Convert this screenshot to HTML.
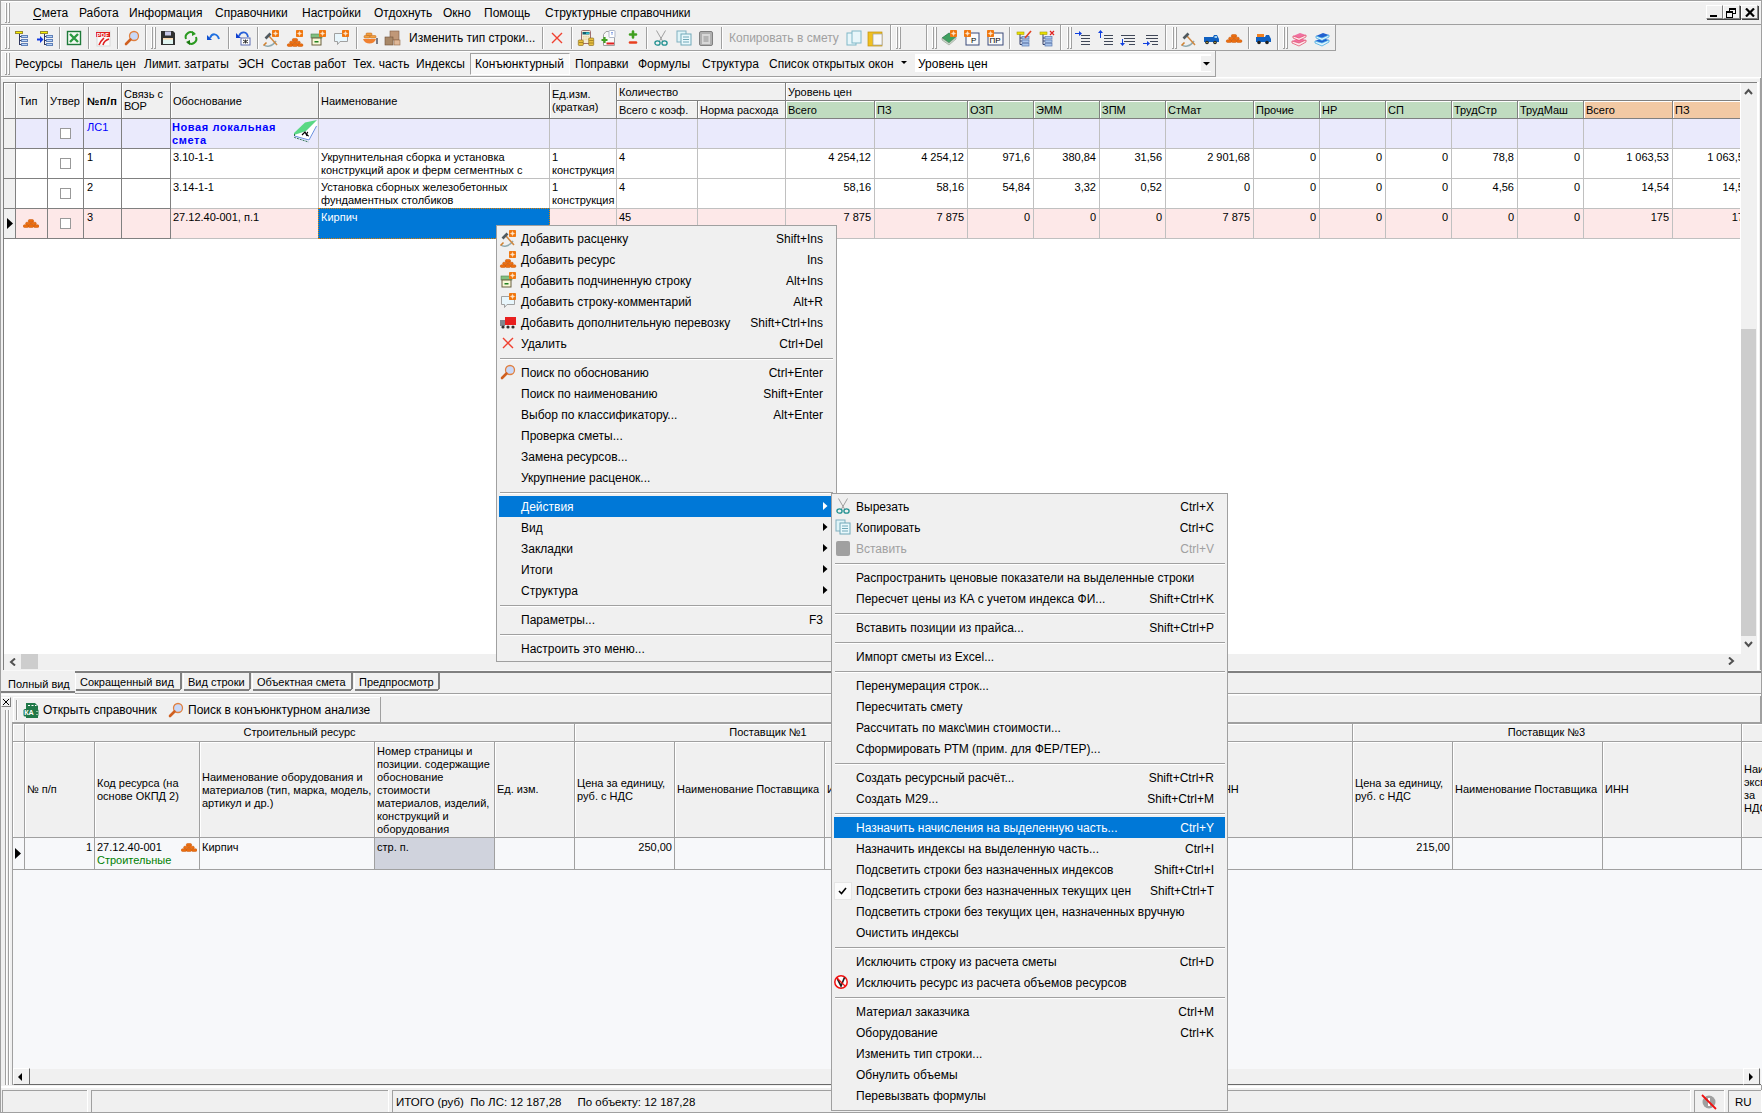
<!DOCTYPE html><html><head><meta charset="utf-8"><style>
*{margin:0;padding:0;box-sizing:border-box}
html,body{width:1762px;height:1113px;overflow:hidden;background:#f0f0f0;font-family:"Liberation Sans",sans-serif;font-size:11px;color:#000}
body>div,body>span,body>svg{position:absolute}
span{white-space:pre;line-height:13px}
.m{font-size:12px;line-height:15px}
.g{font-size:11px;line-height:13px}
</style></head><body><div style="left:0px;top:0px;width:1762px;height:1px;background:#a0a0a0"></div><div style="left:0px;top:0px;width:1px;height:1113px;background:#a0a0a0"></div><div style="left:1761px;top:0px;width:1px;height:1113px;background:#a0a0a0"></div><div style="left:1px;top:1px;width:1760px;height:1px;background:#ffffff"></div><div style="left:1px;top:24px;width:1760px;height:1px;background:#a0a0a0"></div><div style="left:5px;top:3px;width:1px;height:20px;background:#ffffff"></div><div style="left:6px;top:3px;width:1px;height:20px;background:#a0a0a0"></div><div style="left:8px;top:3px;width:1px;height:20px;background:#ffffff"></div><div style="left:9px;top:3px;width:1px;height:20px;background:#a0a0a0"></div><div style="left:5px;top:22px;width:2px;height:1px;background:#a0a0a0"></div><div style="left:8px;top:22px;width:2px;height:1px;background:#a0a0a0"></div><span class="m" style="left:33px;top:6px;">Смета</span><span class="m" style="left:79px;top:6px;">Работа</span><span class="m" style="left:129px;top:6px;">Информация</span><span class="m" style="left:215px;top:6px;">Справочники</span><span class="m" style="left:302px;top:6px;">Настройки</span><span class="m" style="left:374px;top:6px;">Отдохнуть</span><span class="m" style="left:443px;top:6px;">Окно</span><span class="m" style="left:484px;top:6px;">Помощь</span><span class="m" style="left:545px;top:6px;">Структурные справочники</span><div style="left:33px;top:19px;width:8px;height:1px;background:#000"></div><div style="left:1706px;top:5px;width:17px;height:14px;background:#f0f0f0;border-top:1px solid #fff;border-left:1px solid #fff;border-right:1px solid #808080;border-bottom:1px solid #808080;box-shadow:1px 1px 0 #404040"></div><div style="left:1723px;top:5px;width:17px;height:14px;background:#f0f0f0;border-top:1px solid #fff;border-left:1px solid #fff;border-right:1px solid #808080;border-bottom:1px solid #808080;box-shadow:1px 1px 0 #404040"></div><div style="left:1741px;top:5px;width:17px;height:14px;background:#f0f0f0;border-top:1px solid #fff;border-left:1px solid #fff;border-right:1px solid #808080;border-bottom:1px solid #808080;box-shadow:1px 1px 0 #404040"></div><svg style="left:1710px;top:15px" width="7" height="2" viewBox="0 0 7 2"><rect x="0" y="0" width="7" height="2" fill="#000"/></svg><svg style="left:1726px;top:8px" width="10" height="10" viewBox="0 0 10 10" shape-rendering="crispEdges"><rect x="3" y="0" width="7" height="2" fill="#000"/><rect x="3" y="0" width="1" height="4" fill="#000"/><rect x="9" y="0" width="1" height="6" fill="#000"/><rect x="6" y="5" width="4" height="1" fill="#000"/><rect x="0" y="3" width="7" height="7" fill="#000"/><rect x="1" y="5" width="5" height="4" fill="#f0f0f0"/></svg><svg style="left:1745px;top:8px" width="10" height="9" viewBox="0 0 10 9"><path d="M1 .5L9 8.5M9 .5L1 8.5" stroke="#000" stroke-width="2.2"/></svg><div style="left:1px;top:25px;width:145px;height:1px;background:#ffffff"></div><div style="left:1px;top:25px;width:1px;height:26px;background:#ffffff"></div><div style="left:1px;top:50px;width:145px;height:1px;background:#a0a0a0"></div><div style="left:145px;top:25px;width:1px;height:26px;background:#a0a0a0"></div><div style="left:5px;top:27px;width:1px;height:22px;background:#ffffff"></div><div style="left:6px;top:27px;width:1px;height:22px;background:#a0a0a0"></div><div style="left:8px;top:27px;width:1px;height:22px;background:#ffffff"></div><div style="left:9px;top:27px;width:1px;height:22px;background:#a0a0a0"></div><div style="left:5px;top:48px;width:2px;height:1px;background:#a0a0a0"></div><div style="left:8px;top:48px;width:2px;height:1px;background:#a0a0a0"></div><svg style="left:15px;top:30px;overflow:visible" width="16" height="16" viewBox="0 0 16 16"><g shape-rendering="crispEdges" transform="translate(0,-1)"><rect x="0" y="2" width="8" height="3" fill="#988c30"/><rect x="1" y="3" width="6" height="1" fill="#f8f000"/><rect x="4" y="5" width="1" height="11" fill="#303860"/><rect x="5" y="7" width="2" height="1" fill="#303860"/><rect x="5" y="11" width="2" height="1" fill="#303860"/><rect x="5" y="15" width="2" height="1" fill="#303860"/><rect x="6" y="6" width="7" height="3" fill="#6080b8"/><rect x="7" y="7" width="5" height="1" fill="#b8d4f8"/><rect x="6" y="10" width="7" height="3" fill="#6080b8"/><rect x="7" y="11" width="5" height="1" fill="#b8d4f8"/><rect x="6" y="14" width="7" height="3" fill="#6080b8"/><rect x="7" y="15" width="5" height="1" fill="#b8d4f8"/></g></svg><svg style="left:37px;top:30px;overflow:visible" width="16" height="16" viewBox="0 0 16 16"><g shape-rendering="crispEdges" transform="translate(0,-1)"><rect x="3" y="2" width="8" height="3" fill="#988c30"/><rect x="4" y="3" width="6" height="1" fill="#f8f000"/><rect x="7" y="5" width="1" height="11" fill="#303860"/><rect x="8" y="7" width="2" height="1" fill="#303860"/><rect x="8" y="11" width="2" height="1" fill="#303860"/><rect x="8" y="15" width="2" height="1" fill="#303860"/><rect x="9" y="6" width="7" height="3" fill="#6080b8"/><rect x="10" y="7" width="5" height="1" fill="#b8d4f8"/><rect x="9" y="10" width="7" height="3" fill="#6080b8"/><rect x="10" y="11" width="5" height="1" fill="#b8d4f8"/><rect x="9" y="14" width="7" height="3" fill="#6080b8"/><rect x="10" y="15" width="5" height="1" fill="#b8d4f8"/></g><path d="M0 8.5H3V6L6.5 9.5L3 13V10.5H0Z" fill="#1038e0"/></svg><div style="left:59px;top:27px;width:1px;height:22px;background:#a0a0a0"></div><div style="left:60px;top:27px;width:1px;height:22px;background:#ffffff"></div><svg style="left:66px;top:30px;overflow:visible" width="16" height="16" viewBox="0 0 16 16"><rect x="1.5" y="1.5" width="13" height="13" fill="#f4faf4" stroke="#1e7a3a" stroke-width="1.4"/><path d="M4 4L12 12M12 4L4 12" stroke="#2a9a40" stroke-width="2.4"/></svg><div style="left:88px;top:27px;width:1px;height:22px;background:#a0a0a0"></div><div style="left:89px;top:27px;width:1px;height:22px;background:#ffffff"></div><svg style="left:95px;top:30px;overflow:visible" width="16" height="16" viewBox="0 0 16 16"><rect x="2" y="1" width="13" height="15" fill="#fafafa" stroke="#d8d8d8"/><rect x="1" y="2" width="14" height="5" fill="#e02020"/><text x="1.8" y="6.6" font-size="5.6" font-family="Liberation Sans" font-weight="bold" fill="#fff" letter-spacing="0.3">PDF</text><path d="M4 15C6 10 8 9 9 8M8 15C9 11 11 10 14 9" stroke="#e02020" stroke-width="1.6" fill="none"/></svg><div style="left:117px;top:27px;width:1px;height:22px;background:#a0a0a0"></div><div style="left:118px;top:27px;width:1px;height:22px;background:#ffffff"></div><svg style="left:124px;top:30px;overflow:visible" width="16" height="16" viewBox="0 0 16 16"><circle cx="10" cy="6" r="4.5" fill="#c8d8f8" stroke="#e08040" stroke-width="1.3"/><path d="M6.5 9.5L2 14" stroke="#d06020" stroke-width="2.6" stroke-linecap="round"/></svg><div style="left:146px;top:25px;width:745px;height:1px;background:#ffffff"></div><div style="left:146px;top:25px;width:1px;height:26px;background:#ffffff"></div><div style="left:146px;top:50px;width:745px;height:1px;background:#a0a0a0"></div><div style="left:890px;top:25px;width:1px;height:26px;background:#a0a0a0"></div><div style="left:151px;top:27px;width:1px;height:22px;background:#ffffff"></div><div style="left:152px;top:27px;width:1px;height:22px;background:#a0a0a0"></div><div style="left:154px;top:27px;width:1px;height:22px;background:#ffffff"></div><div style="left:155px;top:27px;width:1px;height:22px;background:#a0a0a0"></div><div style="left:151px;top:48px;width:2px;height:1px;background:#a0a0a0"></div><div style="left:154px;top:48px;width:2px;height:1px;background:#a0a0a0"></div><svg style="left:160px;top:30px;overflow:visible" width="16" height="16" viewBox="0 0 16 16"><path d="M1 1H13L15 3V15H1Z" fill="#303030"/><rect x="5" y="1.5" width="6" height="4" fill="#c8c8e8"/><rect x="3" y="8" width="10" height="6" fill="#e0f4f0"/><rect x="3" y="8" width="10" height="1.5" fill="#fcd8b0"/></svg><svg style="left:183px;top:30px;overflow:visible" width="16" height="16" viewBox="0 0 16 16"><path d="M3 9A5 5 0 0 1 11 3.5" stroke="#2a9a20" stroke-width="2" fill="none"/><path d="M13 7A5 5 0 0 1 5 12.5" stroke="#2a9a20" stroke-width="2" fill="none"/><path d="M9 1L13 4L9 6Z" fill="#2a9a20"/><path d="M7 15L3 12L7 10Z" fill="#1a7a10"/></svg><svg style="left:206px;top:30px;overflow:visible" width="16" height="16" viewBox="0 0 16 16"><path d="M4 8C6 3 11 3 13 9" stroke="#2070e0" stroke-width="2" fill="none"/><path d="M1 5L6 10H1Z" fill="#1050d0"/></svg><div style="left:228px;top:27px;width:1px;height:22px;background:#a0a0a0"></div><div style="left:229px;top:27px;width:1px;height:22px;background:#ffffff"></div><svg style="left:236px;top:30px;overflow:visible" width="16" height="16" viewBox="0 0 16 16"><path d="M3 6C5 1 11 1 12 7" stroke="#2860d8" stroke-width="1.8" fill="none"/><path d="M0 3L5 8H0Z" fill="#1040d0"/><rect x="5" y="8" width="9" height="7" fill="#fff" stroke="#5a6ab0"/><path d="M7 10L12 13M12 10L7 13M9.5 9.5V13.5" stroke="#303030" stroke-width="1"/></svg><div style="left:257px;top:27px;width:1px;height:22px;background:#a0a0a0"></div><div style="left:258px;top:27px;width:1px;height:22px;background:#ffffff"></div><svg style="left:263px;top:30px;overflow:visible" width="16" height="16" viewBox="0 0 16 16"><path d="M1 15C3 17 9 17 13 11" stroke="#90aab0" stroke-width="1.5" fill="none"/><path d="M0.5 15.5L3.5 12.5" stroke="#d08030" stroke-width="1.6"/><path d="M6 6L14 15" stroke="#d08840" stroke-width="1.5"/><path d="M2.5 8.5L7.5 3.5" stroke="#505a60" stroke-width="2.6"/><rect x="9" y="0" width="7" height="7" rx="0.8" fill="#f07810"/><circle cx="12.5" cy="3.5" r="1.3" fill="#fff"/><path d="M12.5 0.8V6.2M9.8 3.5H15.2" stroke="#fde0c0" stroke-width="0.6"/></svg><svg style="left:287px;top:30px;overflow:visible" width="16" height="16" viewBox="0 0 16 16"><g fill="#f07010" stroke="#c05000" stroke-width="0.5"><rect x="5.3" y="8.6" width="5.3" height="2.6" rx="1.2"/><rect x="2.65" y="11.2" width="5.3" height="2.6" rx="1.2"/><rect x="7.95" y="11.2" width="5.3" height="2.6" rx="1.2"/><rect x="0.3" y="13.8" width="5.3" height="2.6" rx="1.2"/><rect x="5.3" y="13.8" width="5.3" height="2.6" rx="1.2"/><rect x="10.6" y="13.8" width="5.3" height="2.6" rx="1.2"/></g><rect x="9" y="0" width="7" height="7" rx="0.8" fill="#f07810"/><circle cx="12.5" cy="3.5" r="1.3" fill="#fff"/><path d="M12.5 0.8V6.2M9.8 3.5H15.2" stroke="#fde0c0" stroke-width="0.6"/></svg><svg style="left:310px;top:30px;overflow:visible" width="16" height="16" viewBox="0 0 16 16"><rect x="1" y="4" width="11" height="4" fill="#80c080" stroke="#508050" stroke-width="0.6"/><rect x="2" y="8" width="9" height="7" fill="#f8f8d8" stroke="#6a6040"/><rect x="4.5" y="11" width="4" height="1.5" fill="#208020"/><rect x="9" y="0" width="7" height="7" rx="0.8" fill="#f07810"/><circle cx="12.5" cy="3.5" r="1.3" fill="#fff"/><path d="M12.5 0.8V6.2M9.8 3.5H15.2" stroke="#fde0c0" stroke-width="0.6"/></svg><svg style="left:333px;top:30px;overflow:visible" width="16" height="16" viewBox="0 0 16 16"><path d="M1.5 3.5H14.5V11.5H7L4.5 14.5V11.5H1.5Z" fill="#e8f6fc" stroke="#a0a0a0"/><rect x="9" y="0" width="7" height="7" rx="0.8" fill="#f07810"/><circle cx="12.5" cy="3.5" r="1.3" fill="#fff"/><path d="M12.5 0.8V6.2M9.8 3.5H15.2" stroke="#fde0c0" stroke-width="0.6"/></svg><div style="left:356px;top:27px;width:1px;height:22px;background:#a0a0a0"></div><div style="left:357px;top:27px;width:1px;height:22px;background:#ffffff"></div><svg style="left:362px;top:30px;overflow:visible" width="16" height="16" viewBox="0 0 16 16"><path d="M1 9C3 15 12 15 14 9Z" fill="#f08030"/><g fill="#f0a040" stroke="#c06010" stroke-width="0.5"><rect x="4" y="3" width="6" height="2.5" rx="1"/><rect x="2" y="5.5" width="6" height="2.5" rx="1"/><rect x="8" y="5.5" width="6" height="2.5" rx="1"/></g><path d="M15 8V14" stroke="#303040" stroke-width="1.2"/></svg><svg style="left:385px;top:30px;overflow:visible" width="16" height="16" viewBox="0 0 16 16"><rect x="5" y="1" width="9" height="9" fill="#c09878" stroke="#806048" stroke-width="0.6"/><rect x="0" y="7" width="8" height="8" fill="#a88868" stroke="#705038" stroke-width="0.6"/><rect x="9" y="10" width="6" height="5" fill="#e0b898" stroke="#906848" stroke-width="0.6"/></svg><span class="m" style="left:409px;top:31px;">Изменить тип строки...</span><div style="left:542px;top:27px;width:1px;height:22px;background:#a0a0a0"></div><div style="left:543px;top:27px;width:1px;height:22px;background:#ffffff"></div><svg style="left:549px;top:30px;overflow:visible" width="16" height="16" viewBox="0 0 16 16"><path d="M3 3L13 13M13 3L3 13" stroke="#f04030" stroke-width="1.4"/></svg><div style="left:571px;top:27px;width:1px;height:22px;background:#a0a0a0"></div><div style="left:572px;top:27px;width:1px;height:22px;background:#ffffff"></div><svg style="left:578px;top:30px;overflow:visible" width="16" height="16" viewBox="0 0 16 16"><rect x="3.5" y="0.5" width="9" height="13" rx="1" fill="#f4ecd8" stroke="#a07070"/><rect x="4.5" y="2" width="7" height="2.5" fill="#106070"/><rect x="8" y="2.5" width="3" height="1.5" fill="#30c0d0"/><g fill="#e8d8a0"><rect x="5" y="6" width="1.5" height="1.5"/><rect x="7.3" y="6" width="1.5" height="1.5"/><rect x="9.6" y="6" width="1.5" height="1.5"/><rect x="5" y="8.5" width="1.5" height="1.5"/><rect x="7.3" y="8.5" width="1.5" height="1.5"/><rect x="9.6" y="8.5" width="1.5" height="1.5"/></g><g fill="#e8c040" stroke="#806010" stroke-width="0.6"><rect x="0.3" y="10" width="5" height="5.5" rx="0.8"/><rect x="10.7" y="8" width="5" height="7.5" rx="0.8"/></g><path d="M1 12.5H5M11.3 10.5H15.3M11.3 13H15.3" stroke="#806010" stroke-width="0.6"/></svg><svg style="left:601px;top:30px;overflow:visible" width="16" height="16" viewBox="0 0 16 16"><path d="M2.5 4.5L5 1.5H13.5V15.5H2.5Z" fill="#f8f8f8" stroke="#a0a0a0"/><rect x="8" y="0.5" width="6" height="7" rx="0.8" fill="#fff" stroke="#b0b8c8"/><path d="M10 2.5H12M10 4H12" stroke="#7090e0" stroke-width="0.8"/><path d="M0.5 10H6.5M3.5 7V13" stroke="#40a020" stroke-width="2.2"/><path d="M5.5 13.5H13" stroke="#e02020" stroke-width="2"/></svg><svg style="left:627px;top:30px;overflow:visible" width="16" height="16" viewBox="0 0 16 16"><path d="M3 4.5H9M6 1.5V7.5" stroke="#40a020" stroke-width="2.6" stroke-linecap="round"/><path d="M3 12.5H9" stroke="#e84020" stroke-width="2.6" stroke-linecap="round"/></svg><div style="left:646px;top:27px;width:1px;height:22px;background:#a0a0a0"></div><div style="left:647px;top:27px;width:1px;height:22px;background:#ffffff"></div><svg style="left:653px;top:30px;overflow:visible" width="16" height="16" viewBox="0 0 16 16"><path d="M3.5 0.5L9.5 11M12.5 0.5L6.5 11" stroke="#a0a0a0" stroke-width="1"/><ellipse cx="4.5" cy="13" rx="2.6" ry="2.2" fill="none" stroke="#209090" stroke-width="1.3"/><ellipse cx="11.5" cy="13" rx="2.6" ry="2.2" fill="none" stroke="#209090" stroke-width="1.3"/></svg><svg style="left:676px;top:30px;overflow:visible" width="16" height="16" viewBox="0 0 16 16"><rect x="1" y="1" width="9" height="11" fill="#e0f4f8" stroke="#80b0c0"/><rect x="5" y="4" width="10" height="11" fill="#e8f8fc" stroke="#70a8b8"/><path d="M7 7H13M7 9.5H13M7 12H13" stroke="#70a8b8"/></svg><svg style="left:698px;top:30px;overflow:visible" width="16" height="16" viewBox="0 0 16 16"><rect x="1.5" y="1.5" width="13" height="14" rx="1.5" fill="#b0b0b0" stroke="#808080"/><rect x="4" y="4" width="8" height="10" fill="#d8d8d8"/><path d="M5.5 7H10.5M5.5 9H10.5M5.5 11H10.5" stroke="#909090"/></svg><div style="left:721px;top:27px;width:1px;height:22px;background:#a0a0a0"></div><div style="left:722px;top:27px;width:1px;height:22px;background:#ffffff"></div><span class="m" style="left:729px;top:31px;color:#a0a0a0">Копировать в смету</span><svg style="left:846px;top:30px;overflow:visible" width="16" height="16" viewBox="0 0 16 16"><rect x="1" y="3" width="9" height="12" fill="#e8f6fa" stroke="#80b8c8"/><rect x="6" y="1" width="9" height="12" fill="#e8f6fa" stroke="#80b8c8"/></svg><svg style="left:868px;top:30px;overflow:visible" width="16" height="16" viewBox="0 0 16 16"><rect x="0" y="2" width="14" height="14" fill="#f0c020" stroke="#c09010" stroke-width="0.7"/><rect x="5" y="4" width="9" height="11" fill="#f8f8f8" stroke="#a0a0a0" stroke-width="0.7"/></svg><div style="left:891px;top:25px;width:36px;height:1px;background:#ffffff"></div><div style="left:891px;top:25px;width:1px;height:26px;background:#ffffff"></div><div style="left:891px;top:50px;width:36px;height:1px;background:#a0a0a0"></div><div style="left:926px;top:25px;width:1px;height:26px;background:#a0a0a0"></div><div style="left:896px;top:27px;width:1px;height:22px;background:#ffffff"></div><div style="left:897px;top:27px;width:1px;height:22px;background:#a0a0a0"></div><div style="left:899px;top:27px;width:1px;height:22px;background:#ffffff"></div><div style="left:900px;top:27px;width:1px;height:22px;background:#a0a0a0"></div><div style="left:896px;top:48px;width:2px;height:1px;background:#a0a0a0"></div><div style="left:899px;top:48px;width:2px;height:1px;background:#a0a0a0"></div><div style="left:927px;top:25px;width:134px;height:1px;background:#ffffff"></div><div style="left:927px;top:25px;width:1px;height:26px;background:#ffffff"></div><div style="left:927px;top:50px;width:134px;height:1px;background:#a0a0a0"></div><div style="left:1060px;top:25px;width:1px;height:26px;background:#a0a0a0"></div><div style="left:932px;top:27px;width:1px;height:22px;background:#ffffff"></div><div style="left:933px;top:27px;width:1px;height:22px;background:#a0a0a0"></div><div style="left:935px;top:27px;width:1px;height:22px;background:#ffffff"></div><div style="left:936px;top:27px;width:1px;height:22px;background:#a0a0a0"></div><div style="left:932px;top:48px;width:2px;height:1px;background:#a0a0a0"></div><div style="left:935px;top:48px;width:2px;height:1px;background:#a0a0a0"></div><svg style="left:941px;top:30px;overflow:visible" width="16" height="16" viewBox="0 0 16 16"><path d="M1 8L8 3L15 7L8 13Z" fill="#40a060" stroke="#207040" stroke-width="0.7"/><path d="M1 8V10L8 15L15 9V7L8 13Z" fill="#c8e0c8" stroke="#808080" stroke-width="0.5"/><rect x="9" y="0" width="7" height="7" rx="0.8" fill="#f07810"/><circle cx="12.5" cy="3.5" r="1.3" fill="#fff"/><path d="M12.5 0.8V6.2M9.8 3.5H15.2" stroke="#fde0c0" stroke-width="0.6"/></svg><svg style="left:964px;top:30px;overflow:visible" width="16" height="16" viewBox="0 0 16 16"><rect x="2" y="3" width="13" height="12" fill="#fafafa" stroke="#3a4a7a"/><text x="7" y="13" font-size="8" font-family="Liberation Sans" fill="#000">Р</text><rect x="0" y="0" width="7" height="7" rx="0.8" fill="#f07810"/><circle cx="3.5" cy="3.5" r="1.3" fill="#fff"/><path d="M3.5 0.8V6.2M0.8 3.5H6.2" stroke="#fde0c0" stroke-width="0.6"/></svg><svg style="left:987px;top:30px;overflow:visible" width="16" height="16" viewBox="0 0 16 16"><rect x="1" y="3" width="15" height="12" fill="#fafafa" stroke="#3a4a7a"/><text x="2.5" y="13" font-size="8" font-family="Liberation Sans" fill="#000">ПР</text><rect x="0" y="0" width="7" height="7" rx="0.8" fill="#f07810"/><circle cx="3.5" cy="3.5" r="1.3" fill="#fff"/><path d="M3.5 0.8V6.2M0.8 3.5H6.2" stroke="#fde0c0" stroke-width="0.6"/></svg><div style="left:1009px;top:27px;width:1px;height:22px;background:#a0a0a0"></div><div style="left:1010px;top:27px;width:1px;height:22px;background:#ffffff"></div><svg style="left:1016px;top:30px;overflow:visible" width="16" height="16" viewBox="0 0 16 16"><rect x="1" y="2" width="7" height="2.5" fill="#e8e000" stroke="#a8a000" stroke-width="0.6"/><path d="M4 4.5V14.5H6M4 8H6M4 11H6" stroke="#34406a" fill="none"/><rect x="6" y="6.5" width="7" height="2.5" fill="#a8c4ec" stroke="#5a78b0" stroke-width="0.7"/><rect x="6" y="10" width="7" height="2.5" fill="#a8c4ec" stroke="#5a78b0" stroke-width="0.7"/><rect x="6" y="13.5" width="7" height="2.5" fill="#a8c4ec" stroke="#5a78b0" stroke-width="0.7"/><path d="M9 8L15 1" stroke="#e04020" stroke-width="1.6"/></svg><svg style="left:1039px;top:30px;overflow:visible" width="16" height="16" viewBox="0 0 16 16"><rect x="1" y="2" width="7" height="2.5" fill="#e8e000" stroke="#a8a000" stroke-width="0.6"/><path d="M4 4.5V14.5H6M4 8H6M4 11H6" stroke="#34406a" fill="none"/><rect x="6" y="6.5" width="7" height="2.5" fill="#a8c4ec" stroke="#5a78b0" stroke-width="0.7"/><rect x="6" y="10" width="7" height="2.5" fill="#a8c4ec" stroke="#5a78b0" stroke-width="0.7"/><rect x="6" y="13.5" width="7" height="2.5" fill="#a8c4ec" stroke="#5a78b0" stroke-width="0.7"/><path d="M11 1L15 5M15 1L11 5" stroke="#e02020" stroke-width="1.2"/></svg><div style="left:1061px;top:25px;width:105px;height:1px;background:#ffffff"></div><div style="left:1061px;top:25px;width:1px;height:26px;background:#ffffff"></div><div style="left:1061px;top:50px;width:105px;height:1px;background:#a0a0a0"></div><div style="left:1165px;top:25px;width:1px;height:26px;background:#a0a0a0"></div><div style="left:1067px;top:27px;width:1px;height:22px;background:#ffffff"></div><div style="left:1068px;top:27px;width:1px;height:22px;background:#a0a0a0"></div><div style="left:1070px;top:27px;width:1px;height:22px;background:#ffffff"></div><div style="left:1071px;top:27px;width:1px;height:22px;background:#a0a0a0"></div><div style="left:1067px;top:48px;width:2px;height:1px;background:#a0a0a0"></div><div style="left:1070px;top:48px;width:2px;height:1px;background:#a0a0a0"></div><svg style="left:1075.0px;top:30px;overflow:visible" width="16" height="16" viewBox="0 0 16 16"><path d="M6 5.5H15M6 8.5H15M6 11.5H15M6 14.5H15" stroke="#404858" stroke-width="1"/><path d="M0 3H4V1L7 3.5L4 6V4H0Z" fill="#1040e0"/></svg><svg style="left:1097.7px;top:30px;overflow:visible" width="16" height="16" viewBox="0 0 16 16"><path d="M6 5.5H15M6 8.5H15M6 11.5H15M6 14.5H15" stroke="#404858" stroke-width="1"/><path d="M2 8V3H0L2.5 0L5 3H3V8Z" fill="#1040e0"/></svg><svg style="left:1120.4px;top:30px;overflow:visible" width="16" height="16" viewBox="0 0 16 16"><path d="M1 5.5H15M4 8.5H15M4 11.5H15M9 14.5H15" stroke="#404858"/><path d="M2 9V13H0L2.5 16L5 13H3V9Z" fill="#1040e0"/></svg><svg style="left:1143.1px;top:30px;overflow:visible" width="16" height="16" viewBox="0 0 16 16"><path d="M3 5.5H15M3 8.5H15M7 11.5H15M9 14.5H15" stroke="#404858"/><path d="M0 13H4V11L7 13.5L4 16V14H0Z" fill="#1040e0"/></svg><div style="left:1166px;top:25px;width:112px;height:1px;background:#ffffff"></div><div style="left:1166px;top:25px;width:1px;height:26px;background:#ffffff"></div><div style="left:1166px;top:50px;width:112px;height:1px;background:#a0a0a0"></div><div style="left:1277px;top:25px;width:1px;height:26px;background:#a0a0a0"></div><div style="left:1172px;top:27px;width:1px;height:22px;background:#ffffff"></div><div style="left:1173px;top:27px;width:1px;height:22px;background:#a0a0a0"></div><div style="left:1175px;top:27px;width:1px;height:22px;background:#ffffff"></div><div style="left:1176px;top:27px;width:1px;height:22px;background:#a0a0a0"></div><div style="left:1172px;top:48px;width:2px;height:1px;background:#a0a0a0"></div><div style="left:1175px;top:48px;width:2px;height:1px;background:#a0a0a0"></div><svg style="left:1181px;top:30px;overflow:visible" width="16" height="16" viewBox="0 0 16 16"><path d="M1 15C3 17 9 17 13 11" stroke="#90aab0" stroke-width="1.5" fill="none"/><path d="M0.5 15.5L3.5 12.5" stroke="#d08030" stroke-width="1.6"/><path d="M6 6L14 15" stroke="#d08840" stroke-width="1.5"/><path d="M2.5 8.5L7.5 3.5" stroke="#505a60" stroke-width="2.6"/></svg><svg style="left:1203px;top:30px;overflow:visible" width="16" height="16" viewBox="0 0 16 16"><path d="M1 7H10L11 5H14L16 9V12H1Z" fill="#1060c0"/><rect x="11.5" y="6" width="2.5" height="2" fill="#a0d0f0"/><circle cx="4" cy="12.5" r="1.8" fill="#202020"/><circle cx="12" cy="12.5" r="1.8" fill="#202020"/><circle cx="4" cy="12.5" r="0.7" fill="#f0e060"/><circle cx="12" cy="12.5" r="0.7" fill="#f0e060"/></svg><svg style="left:1226px;top:30px;overflow:visible" width="16" height="16" viewBox="0 0 16 16"><g transform="translate(0,-4)"><g fill="#f07010" stroke="#c05000" stroke-width="0.5"><rect x="5.3" y="8.6" width="5.3" height="2.6" rx="1.2"/><rect x="2.65" y="11.2" width="5.3" height="2.6" rx="1.2"/><rect x="7.95" y="11.2" width="5.3" height="2.6" rx="1.2"/><rect x="0.3" y="13.8" width="5.3" height="2.6" rx="1.2"/><rect x="5.3" y="13.8" width="5.3" height="2.6" rx="1.2"/><rect x="10.6" y="13.8" width="5.3" height="2.6" rx="1.2"/></g></g></svg><div style="left:1248px;top:27px;width:1px;height:22px;background:#a0a0a0"></div><div style="left:1249px;top:27px;width:1px;height:22px;background:#ffffff"></div><svg style="left:1255px;top:30px;overflow:visible" width="16" height="16" viewBox="0 0 16 16"><path d="M1 7H10L11 5H14L16 9V12H1Z" fill="#1060c0"/><rect x="2" y="4" width="7" height="3" fill="#f08020"/><circle cx="4" cy="12.5" r="1.8" fill="#202020"/><circle cx="12" cy="12.5" r="1.8" fill="#202020"/></svg><div style="left:1278px;top:25px;width:58px;height:1px;background:#ffffff"></div><div style="left:1278px;top:25px;width:1px;height:26px;background:#ffffff"></div><div style="left:1278px;top:50px;width:58px;height:1px;background:#a0a0a0"></div><div style="left:1335px;top:25px;width:1px;height:26px;background:#a0a0a0"></div><div style="left:1283px;top:27px;width:1px;height:22px;background:#ffffff"></div><div style="left:1284px;top:27px;width:1px;height:22px;background:#a0a0a0"></div><div style="left:1286px;top:27px;width:1px;height:22px;background:#ffffff"></div><div style="left:1287px;top:27px;width:1px;height:22px;background:#a0a0a0"></div><div style="left:1283px;top:48px;width:2px;height:1px;background:#a0a0a0"></div><div style="left:1286px;top:48px;width:2px;height:1px;background:#a0a0a0"></div><svg style="left:1291px;top:30px;overflow:visible" width="16" height="16" viewBox="0 0 16 16"><path d="M1 11L8 8L15 10L8 13Z" fill="#f070a0"/><path d="M1 11V13L8 16L15 12V10L8 13Z" fill="#fce8ee" stroke="#e04060" stroke-width="0.7"/><path d="M2 6L9 3L15 5L8 8Z" fill="#f070a0"/><path d="M2 6V8L8 10.5L15 7V5L8 8Z" fill="#fce8ee" stroke="#e04060" stroke-width="0.7"/></svg><svg style="left:1314px;top:30px;overflow:visible" width="16" height="16" viewBox="0 0 16 16"><path d="M1 11L8 8L15 10L8 13Z" fill="#2060d0"/><path d="M1 11V13L8 16L15 12V10L8 13Z" fill="#e0f4fc" stroke="#30a0e0" stroke-width="0.7"/><path d="M2 6L9 3L15 5L8 8Z" fill="#2060d0"/><path d="M2 6V8L8 10.5L15 7V5L8 8Z" fill="#e0f4fc" stroke="#30a0e0" stroke-width="0.7"/></svg><div style="left:1px;top:51px;width:1215px;height:1px;background:#ffffff"></div><div style="left:1px;top:51px;width:1px;height:26px;background:#ffffff"></div><div style="left:1px;top:76px;width:1215px;height:1px;background:#a0a0a0"></div><div style="left:1215px;top:51px;width:1px;height:26px;background:#a0a0a0"></div><div style="left:5px;top:53px;width:1px;height:22px;background:#ffffff"></div><div style="left:6px;top:53px;width:1px;height:22px;background:#a0a0a0"></div><div style="left:8px;top:53px;width:1px;height:22px;background:#ffffff"></div><div style="left:9px;top:53px;width:1px;height:22px;background:#a0a0a0"></div><div style="left:5px;top:74px;width:2px;height:1px;background:#a0a0a0"></div><div style="left:8px;top:74px;width:2px;height:1px;background:#a0a0a0"></div><span class="m" style="left:15px;top:57px;">Ресурсы</span><span class="m" style="left:71px;top:57px;">Панель цен</span><span class="m" style="left:144px;top:57px;">Лимит. затраты</span><span class="m" style="left:238px;top:57px;">ЭСН</span><span class="m" style="left:271px;top:57px;">Состав работ</span><span class="m" style="left:353px;top:57px;">Тех. часть</span><span class="m" style="left:416px;top:57px;">Индексы</span><span class="m" style="left:575px;top:57px;">Поправки</span><span class="m" style="left:638px;top:57px;">Формулы</span><span class="m" style="left:702px;top:57px;">Структура</span><span class="m" style="left:769px;top:57px;">Список открытых окон</span><div style="left:470px;top:53px;width:100px;height:22px;border-top:1px solid #a0a0a0;border-left:1px solid #a0a0a0;border-right:1px solid #fff;border-bottom:1px solid #fff;background:#f8f8f8"></div><span class="m" style="left:475px;top:57px;">Конъюнктурный</span><svg style="left:901px;top:61px" width="6" height="4" viewBox="0 0 6 4"><path d="M0 0H6L3 3Z" fill="#000"/></svg><div style="left:915px;top:54px;width:296px;height:18px;background:#fff"></div><div style="left:1201px;top:56px;width:10px;height:15px;background:#f0f0f0"></div><svg style="left:1203px;top:62px" width="7" height="4" viewBox="0 0 7 4"><path d="M0 0H7L3.5 3.5Z" fill="#000"/></svg><span class="m" style="left:918px;top:57px;">Уровень цен</span><div style="left:1px;top:77px;width:1760px;height:1px;background:#ffffff"></div><div style="left:1px;top:78px;width:1760px;height:1px;background:#f8f8f8"></div><div style="left:3px;top:82px;width:1756px;height:590px;background:#fff"></div><div style="left:3px;top:654px;width:1737px;height:16px;background:#f0f0f0"></div><div style="left:21px;top:654px;width:17px;height:15px;background:#cdcdcd"></div><svg style="left:9px;top:658px" width="7" height="8" viewBox="0 0 7 8"><path d="M6 .5L2 4L6 7.5" stroke="#505050" stroke-width="2" fill="none"/></svg><svg style="left:1728px;top:657px" width="7" height="8" viewBox="0 0 7 8"><path d="M1 .5L5 4L1 7.5" stroke="#505050" stroke-width="2" fill="none"/></svg><div style="left:1740px;top:83px;width:18px;height:571px;background:#f0f0f0"></div><div style="left:1741px;top:329px;width:15px;height:307px;background:#cdcdcd"></div><svg style="left:1744px;top:88px" width="9" height="7" viewBox="0 0 9 7"><path d="M1 6L4.5 2L8 6" stroke="#505050" stroke-width="2" fill="none"/></svg><svg style="left:1744px;top:641px" width="9" height="7" viewBox="0 0 9 7"><path d="M1 1L4.5 5L8 1" stroke="#505050" stroke-width="2" fill="none"/></svg><div style="left:1740px;top:654px;width:18px;height:16px;background:#f0f0f0"></div><div style="left:3px;top:82px;width:1px;height:589px;background:#808080"></div><div style="left:3px;top:82px;width:1755px;height:1px;background:#808080"></div><div style="left:1757px;top:82px;width:1px;height:589px;background:#ffffff"></div><div style="left:1740px;top:83px;width:1px;height:571px;background:#ffffff"></div><div style="left:1760px;top:78px;width:1px;height:1035px;background:#a0a0a0"></div><div style="left:3px;top:670px;width:1756px;height:1px;background:#f0f0f0"></div><div style="left:4px;top:83px;width:1736px;height:35px;background:#f0f0f0"></div><div style="left:786px;top:101px;width:88px;height:17px;background:#c0dcc0;border-top:1px solid #fff;border-left:1px solid #fff"></div><div style="left:875px;top:101px;width:92px;height:17px;background:#c0dcc0;border-top:1px solid #fff;border-left:1px solid #fff"></div><div style="left:968px;top:101px;width:65px;height:17px;background:#c0dcc0;border-top:1px solid #fff;border-left:1px solid #fff"></div><div style="left:1034px;top:101px;width:65px;height:17px;background:#c0dcc0;border-top:1px solid #fff;border-left:1px solid #fff"></div><div style="left:1100px;top:101px;width:65px;height:17px;background:#c0dcc0;border-top:1px solid #fff;border-left:1px solid #fff"></div><div style="left:1166px;top:101px;width:87px;height:17px;background:#c0dcc0;border-top:1px solid #fff;border-left:1px solid #fff"></div><div style="left:1254px;top:101px;width:65px;height:17px;background:#c0dcc0;border-top:1px solid #fff;border-left:1px solid #fff"></div><div style="left:1320px;top:101px;width:65px;height:17px;background:#c0dcc0;border-top:1px solid #fff;border-left:1px solid #fff"></div><div style="left:1386px;top:101px;width:65px;height:17px;background:#c0dcc0;border-top:1px solid #fff;border-left:1px solid #fff"></div><div style="left:1452px;top:101px;width:65px;height:17px;background:#c0dcc0;border-top:1px solid #fff;border-left:1px solid #fff"></div><div style="left:1518px;top:101px;width:65px;height:17px;background:#c0dcc0;border-top:1px solid #fff;border-left:1px solid #fff"></div><div style="left:1584px;top:101px;width:88px;height:17px;background:#f2c9a4;border-top:1px solid #fff;border-left:1px solid #fff"></div><div style="left:1673px;top:101px;width:67px;height:17px;background:#f2c9a4;border-top:1px solid #fff;border-left:1px solid #fff"></div><div style="left:16px;top:119px;width:1724px;height:29px;background:#eaeafc"></div><div style="left:16px;top:209px;width:1724px;height:29px;background:#fde8e8"></div><div style="left:4px;top:119px;width:11px;height:119px;background:#f0f0f0"></div><div style="left:4px;top:83px;width:1736px;height:1px;background:#ffffff"></div><div style="left:4px;top:83px;width:1px;height:35px;background:#ffffff"></div><div style="left:16px;top:83px;width:1px;height:35px;background:#ffffff"></div><div style="left:48px;top:83px;width:1px;height:35px;background:#ffffff"></div><div style="left:84px;top:83px;width:1px;height:35px;background:#ffffff"></div><div style="left:122px;top:83px;width:1px;height:35px;background:#ffffff"></div><div style="left:171px;top:83px;width:1px;height:35px;background:#ffffff"></div><div style="left:319px;top:83px;width:1px;height:35px;background:#ffffff"></div><div style="left:550px;top:83px;width:1px;height:35px;background:#ffffff"></div><div style="left:617px;top:83px;width:1px;height:35px;background:#ffffff"></div><div style="left:698px;top:101px;width:1px;height:17px;background:#ffffff"></div><div style="left:786px;top:83px;width:1px;height:35px;background:#ffffff"></div><div style="left:875px;top:101px;width:1px;height:17px;background:#ffffff"></div><div style="left:968px;top:101px;width:1px;height:17px;background:#ffffff"></div><div style="left:1034px;top:101px;width:1px;height:17px;background:#ffffff"></div><div style="left:1100px;top:101px;width:1px;height:17px;background:#ffffff"></div><div style="left:1166px;top:101px;width:1px;height:17px;background:#ffffff"></div><div style="left:1254px;top:101px;width:1px;height:17px;background:#ffffff"></div><div style="left:1320px;top:101px;width:1px;height:17px;background:#ffffff"></div><div style="left:1386px;top:101px;width:1px;height:17px;background:#ffffff"></div><div style="left:1452px;top:101px;width:1px;height:17px;background:#ffffff"></div><div style="left:1518px;top:101px;width:1px;height:17px;background:#ffffff"></div><div style="left:1584px;top:101px;width:1px;height:17px;background:#ffffff"></div><div style="left:1673px;top:101px;width:1px;height:17px;background:#ffffff"></div><div style="left:617px;top:101px;width:1123px;height:1px;background:#ffffff"></div><div style="left:3px;top:148px;width:168px;height:1px;background:#808080"></div><div style="left:171px;top:148px;width:1569px;height:1px;background:#c0c0c0"></div><div style="left:3px;top:178px;width:168px;height:1px;background:#808080"></div><div style="left:171px;top:178px;width:1569px;height:1px;background:#c0c0c0"></div><div style="left:3px;top:208px;width:168px;height:1px;background:#808080"></div><div style="left:171px;top:208px;width:1569px;height:1px;background:#c0c0c0"></div><div style="left:3px;top:238px;width:168px;height:1px;background:#808080"></div><div style="left:171px;top:238px;width:1569px;height:1px;background:#c0c0c0"></div><div style="left:3px;top:118px;width:1737px;height:1px;background:#808080"></div><div style="left:616px;top:100px;width:1124px;height:1px;background:#808080"></div><div style="left:15px;top:82px;width:1px;height:156px;background:#808080"></div><div style="left:47px;top:82px;width:1px;height:156px;background:#808080"></div><div style="left:83px;top:82px;width:1px;height:156px;background:#808080"></div><div style="left:121px;top:82px;width:1px;height:156px;background:#808080"></div><div style="left:170px;top:82px;width:1px;height:156px;background:#808080"></div><div style="left:318px;top:82px;width:1px;height:36px;background:#808080"></div><div style="left:318px;top:119px;width:1px;height:119px;background:#c0c0c0"></div><div style="left:549px;top:82px;width:1px;height:36px;background:#808080"></div><div style="left:549px;top:119px;width:1px;height:119px;background:#c0c0c0"></div><div style="left:616px;top:82px;width:1px;height:36px;background:#808080"></div><div style="left:616px;top:119px;width:1px;height:119px;background:#c0c0c0"></div><div style="left:697px;top:100px;width:1px;height:18px;background:#808080"></div><div style="left:697px;top:119px;width:1px;height:119px;background:#c0c0c0"></div><div style="left:785px;top:82px;width:1px;height:36px;background:#808080"></div><div style="left:785px;top:119px;width:1px;height:119px;background:#c0c0c0"></div><div style="left:874px;top:100px;width:1px;height:18px;background:#808080"></div><div style="left:874px;top:119px;width:1px;height:119px;background:#c0c0c0"></div><div style="left:967px;top:100px;width:1px;height:18px;background:#808080"></div><div style="left:967px;top:119px;width:1px;height:119px;background:#c0c0c0"></div><div style="left:1033px;top:100px;width:1px;height:18px;background:#808080"></div><div style="left:1033px;top:119px;width:1px;height:119px;background:#c0c0c0"></div><div style="left:1099px;top:100px;width:1px;height:18px;background:#808080"></div><div style="left:1099px;top:119px;width:1px;height:119px;background:#c0c0c0"></div><div style="left:1165px;top:100px;width:1px;height:18px;background:#808080"></div><div style="left:1165px;top:119px;width:1px;height:119px;background:#c0c0c0"></div><div style="left:1253px;top:100px;width:1px;height:18px;background:#808080"></div><div style="left:1253px;top:119px;width:1px;height:119px;background:#c0c0c0"></div><div style="left:1319px;top:100px;width:1px;height:18px;background:#808080"></div><div style="left:1319px;top:119px;width:1px;height:119px;background:#c0c0c0"></div><div style="left:1385px;top:100px;width:1px;height:18px;background:#808080"></div><div style="left:1385px;top:119px;width:1px;height:119px;background:#c0c0c0"></div><div style="left:1451px;top:100px;width:1px;height:18px;background:#808080"></div><div style="left:1451px;top:119px;width:1px;height:119px;background:#c0c0c0"></div><div style="left:1517px;top:100px;width:1px;height:18px;background:#808080"></div><div style="left:1517px;top:119px;width:1px;height:119px;background:#c0c0c0"></div><div style="left:1583px;top:100px;width:1px;height:18px;background:#808080"></div><div style="left:1583px;top:119px;width:1px;height:119px;background:#c0c0c0"></div><div style="left:1672px;top:100px;width:1px;height:18px;background:#808080"></div><div style="left:1672px;top:119px;width:1px;height:119px;background:#c0c0c0"></div><span class="g" style="left:19px;top:95px;">Тип</span><span class="g" style="left:50px;top:95px;">Утвер</span><span class="g" style="left:87px;top:95px;font-weight:bold;letter-spacing:0.4px">№п/п</span><span class="g" style="left:124px;top:88px;">Связь с</span><span class="g" style="left:124px;top:100px;">ВОР</span><span class="g" style="left:173px;top:95px;">Обоснование</span><span class="g" style="left:321px;top:95px;">Наименование</span><span class="g" style="left:552px;top:88px;">Ед.изм.</span><span class="g" style="left:552px;top:101px;">(краткая)</span><span class="g" style="left:619px;top:86px;">Количество</span><span class="g" style="left:788px;top:86px;">Уровень цен</span><span class="g" style="left:619px;top:104px;">Всего с коэф.</span><span class="g" style="left:700px;top:104px;">Норма расхода</span><span class="g" style="left:788px;top:104px;">Всего</span><span class="g" style="left:877px;top:104px;">ПЗ</span><span class="g" style="left:970px;top:104px;">ОЗП</span><span class="g" style="left:1036px;top:104px;">ЭММ</span><span class="g" style="left:1102px;top:104px;">ЗПМ</span><span class="g" style="left:1168px;top:104px;">СтМат</span><span class="g" style="left:1256px;top:104px;">Прочие</span><span class="g" style="left:1322px;top:104px;">НР</span><span class="g" style="left:1388px;top:104px;">СП</span><span class="g" style="left:1454px;top:104px;">ТрудСтр</span><span class="g" style="left:1520px;top:104px;">ТрудМаш</span><span class="g" style="left:1586px;top:104px;">Всего</span><span class="g" style="left:1675px;top:104px;">ПЗ</span><div style="left:60px;top:128px;width:11px;height:11px;background:#fff;border:1px solid #999"></div><div style="left:60px;top:158px;width:11px;height:11px;background:#fff;border:1px solid #999"></div><div style="left:60px;top:188px;width:11px;height:11px;background:#fff;border:1px solid #999"></div><div style="left:60px;top:218px;width:11px;height:11px;background:#fff;border:1px solid #999"></div><svg style="left:7px;top:218px" width="6" height="11" viewBox="0 0 6 11"><path d="M0 0L6 5.5L0 11Z" fill="#000"/></svg><svg style="left:23px;top:219px" width="16" height="9" viewBox="0 8.5 16 8"><g fill="#f07010" stroke="#c05000" stroke-width="0.5"><rect x="5.3" y="8.6" width="5.3" height="2.6" rx="1.2"/><rect x="2.65" y="11.2" width="5.3" height="2.6" rx="1.2"/><rect x="7.95" y="11.2" width="5.3" height="2.6" rx="1.2"/><rect x="0.3" y="13.8" width="5.3" height="2.6" rx="1.2"/><rect x="5.3" y="13.8" width="5.3" height="2.6" rx="1.2"/><rect x="10.6" y="13.8" width="5.3" height="2.6" rx="1.2"/></g></svg><span class="g" style="left:87px;top:121px;color:#0000ff">ЛС1</span><span class="g" style="left:172px;top:121px;color:#0000ff;font-weight:bold;letter-spacing:0.6px">Новая локальная</span><span class="g" style="left:172px;top:134px;color:#0000ff;font-weight:bold;letter-spacing:0.6px">смета</span><svg style="left:294px;top:119px" width="24" height="24" viewBox="0 0 24 24"><path d="M12 12L23 1L23 6L15 22L0 16Z" fill="#fff"/><path d="M0 14L11 3.5L23 1L12 12L0 16Z" fill="#5ad884"/><path d="M0.5 17L15 21L22.5 7" stroke="#6a90e0" stroke-width="1" fill="none"/><path d="M0.5 15V18.5L14.5 23" stroke="#2a7050" stroke-width="1" fill="none" stroke-dasharray="2 1"/><path d="M8 16L11 13L13 17M14 13C12 14 13 17 15 17" stroke="#000" stroke-width="1.1" fill="none"/></svg><span class="g" style="left:87px;top:151px;">1</span><span class="g" style="left:173px;top:151px;">3.10-1-1</span><div class="g" style="left:321px;top:151px;width:227px;height:28px;overflow:hidden;line-height:13px;white-space:pre;"><div style="height:13px">Укрупнительная сборка и установка</div><div style="height:13px">конструкций арок и ферм сегментных с</div></div><div class="g" style="left:552px;top:151px;width:63px;height:28px;overflow:hidden;line-height:13px;white-space:pre;"><div style="height:13px">1</div><div style="height:13px">конструкция</div></div><span class="g" style="left:619px;top:151px;">4</span><span class="g" style="right:891px;top:151px;">4 254,12</span><span class="g" style="right:798px;top:151px;">4 254,12</span><span class="g" style="right:732px;top:151px;">971,6</span><span class="g" style="right:666px;top:151px;">380,84</span><span class="g" style="right:600px;top:151px;">31,56</span><span class="g" style="right:512px;top:151px;">2 901,68</span><span class="g" style="right:446px;top:151px;">0</span><span class="g" style="right:380px;top:151px;">0</span><span class="g" style="right:314px;top:151px;">0</span><span class="g" style="right:248px;top:151px;">78,8</span><span class="g" style="right:182px;top:151px;">0</span><span class="g" style="right:93px;top:151px;">1 063,53</span><div class="g" style="left:1673px;top:151px;width:67px;height:14px;overflow:hidden"><span style="position:absolute;right:-10px;top:0;white-space:pre">1 063,53</span></div><span class="g" style="left:87px;top:181px;">2</span><span class="g" style="left:173px;top:181px;">3.14-1-1</span><div class="g" style="left:321px;top:181px;width:227px;height:28px;overflow:hidden;line-height:13px;white-space:pre;"><div style="height:13px">Установка сборных железобетонных</div><div style="height:13px">фундаментных столбиков</div></div><div class="g" style="left:552px;top:181px;width:63px;height:28px;overflow:hidden;line-height:13px;white-space:pre;"><div style="height:13px">1</div><div style="height:13px">конструкция</div></div><span class="g" style="left:619px;top:181px;">4</span><span class="g" style="right:891px;top:181px;">58,16</span><span class="g" style="right:798px;top:181px;">58,16</span><span class="g" style="right:732px;top:181px;">54,84</span><span class="g" style="right:666px;top:181px;">3,32</span><span class="g" style="right:600px;top:181px;">0,52</span><span class="g" style="right:512px;top:181px;">0</span><span class="g" style="right:446px;top:181px;">0</span><span class="g" style="right:380px;top:181px;">0</span><span class="g" style="right:314px;top:181px;">0</span><span class="g" style="right:248px;top:181px;">4,56</span><span class="g" style="right:182px;top:181px;">0</span><span class="g" style="right:93px;top:181px;">14,54</span><div class="g" style="left:1673px;top:181px;width:67px;height:14px;overflow:hidden"><span style="position:absolute;right:-10px;top:0;white-space:pre">14,54</span></div><span class="g" style="left:87px;top:211px;">3</span><span class="g" style="left:173px;top:211px;">27.12.40-001, п.1</span><span class="g" style="left:619px;top:211px;">45</span><span class="g" style="right:891px;top:211px;">7 875</span><span class="g" style="right:798px;top:211px;">7 875</span><span class="g" style="right:732px;top:211px;">0</span><span class="g" style="right:666px;top:211px;">0</span><span class="g" style="right:600px;top:211px;">0</span><span class="g" style="right:512px;top:211px;">7 875</span><span class="g" style="right:446px;top:211px;">0</span><span class="g" style="right:380px;top:211px;">0</span><span class="g" style="right:314px;top:211px;">0</span><span class="g" style="right:248px;top:211px;">0</span><span class="g" style="right:182px;top:211px;">0</span><span class="g" style="right:93px;top:211px;">175</span><div class="g" style="left:1673px;top:211px;width:67px;height:14px;overflow:hidden"><span style="position:absolute;right:-10px;top:0;white-space:pre">175</span></div><div style="left:318px;top:208px;width:232px;height:31px;background:#0078d7;outline:1px dotted #e08000;outline-offset:-1px"></div><span class="g" style="left:321px;top:211px;color:#fff">Кирпич</span><div style="left:1px;top:670px;width:1760px;height:26px;background:#f0f0f0"></div><div style="left:4px;top:670px;width:1736px;height:1px;background:#f8f8f8"></div><div style="left:75px;top:671px;width:1686px;height:1px;background:#808080"></div><div style="left:75px;top:672px;width:1686px;height:1px;background:#808080"></div><div style="left:1px;top:691px;width:74px;height:1px;background:#808080"></div><div style="left:1px;top:692px;width:74px;height:1px;background:#808080"></div><div style="left:75px;top:693px;width:1686px;height:1px;background:#a0a0a0"></div><div style="left:1px;top:694px;width:1760px;height:1px;background:#ffffff"></div><div style="left:1px;top:695px;width:1760px;height:1px;background:#f8f8f8"></div><span class="g" style="left:8px;top:678px;">Полный вид</span><div style="left:75px;top:673px;width:1px;height:16px;background:#ffffff"></div><div style="left:180px;top:673px;width:1px;height:17px;background:#808080"></div><div style="left:181px;top:673px;width:1px;height:16px;background:#808080"></div><div style="left:76px;top:689px;width:104px;height:1px;background:#808080"></div><div style="left:76px;top:690px;width:104px;height:1px;background:#808080"></div><span class="g" style="left:80px;top:676px;">Сокращенный вид</span><div style="left:183px;top:673px;width:1px;height:16px;background:#ffffff"></div><div style="left:249px;top:673px;width:1px;height:17px;background:#808080"></div><div style="left:250px;top:673px;width:1px;height:16px;background:#808080"></div><div style="left:184px;top:689px;width:65px;height:1px;background:#808080"></div><div style="left:184px;top:690px;width:65px;height:1px;background:#808080"></div><span class="g" style="left:188px;top:676px;">Вид строки</span><div style="left:252px;top:673px;width:1px;height:16px;background:#ffffff"></div><div style="left:351px;top:673px;width:1px;height:17px;background:#808080"></div><div style="left:352px;top:673px;width:1px;height:16px;background:#808080"></div><div style="left:253px;top:689px;width:98px;height:1px;background:#808080"></div><div style="left:253px;top:690px;width:98px;height:1px;background:#808080"></div><span class="g" style="left:257px;top:676px;">Объектная смета</span><div style="left:354px;top:673px;width:1px;height:16px;background:#ffffff"></div><div style="left:438px;top:673px;width:1px;height:17px;background:#808080"></div><div style="left:439px;top:673px;width:1px;height:16px;background:#808080"></div><div style="left:355px;top:689px;width:83px;height:1px;background:#808080"></div><div style="left:355px;top:690px;width:83px;height:1px;background:#808080"></div><span class="g" style="left:359px;top:676px;">Предпросмотр</span><div style="left:1px;top:697px;width:10px;height:10px;background:#f0f0f0;border-top:1px solid #fff;border-left:1px solid #fff;border-right:1px solid #808080;border-bottom:1px solid #808080"></div><svg style="left:3px;top:699px" width="6" height="6" viewBox="0 0 6 6"><path d="M0 0L6 6M6 0L0 6" stroke="#000" stroke-width="1"/></svg><div style="left:5px;top:710px;width:1px;height:375px;background:#a0a0a0"></div><div style="left:6px;top:710px;width:1px;height:375px;background:#ffffff"></div><div style="left:8px;top:710px;width:1px;height:375px;background:#a0a0a0"></div><div style="left:9px;top:710px;width:1px;height:375px;background:#ffffff"></div><div style="left:13px;top:697px;width:368px;height:1px;background:#ffffff"></div><div style="left:13px;top:697px;width:1px;height:26px;background:#ffffff"></div><div style="left:13px;top:722px;width:368px;height:1px;background:#a0a0a0"></div><div style="left:380px;top:697px;width:1px;height:26px;background:#a0a0a0"></div><div style="left:16px;top:700px;width:1px;height:20px;background:#a0a0a0"></div><div style="left:17px;top:700px;width:1px;height:20px;background:#ffffff"></div><svg style="left:23px;top:702px;overflow:visible" width="16" height="16" viewBox="0 0 16 16"><path d="M3 1H12L15 4V16H3Z" fill="#207848"/><path d="M5 3.5H7M8.5 3.5H10.5M12 3.5H13.5" stroke="#fff" stroke-width="1"/><rect x="0.5" y="7" width="15" height="7.5" rx="1.5" fill="#207848"/><text x="1.2" y="13.4" font-size="7.2" font-family="Liberation Sans" font-weight="bold" fill="#fff">КА</text><path d="M14 9V10M14 12V13" stroke="#fff"/></svg><span class="m" style="left:43px;top:703px;">Открыть справочник</span><svg style="left:168px;top:702px;overflow:visible" width="16" height="16" viewBox="0 0 16 16"><circle cx="10" cy="6" r="4.5" fill="#c8d8f8" stroke="#e08040" stroke-width="1.3"/><path d="M6.5 9.5L2 14" stroke="#d06020" stroke-width="2.6" stroke-linecap="round"/></svg><span class="m" style="left:188px;top:703px;">Поиск в конъюнктурном анализе</span><div style="left:12px;top:723px;width:1750px;height:362px;background:#f7f8fa"></div><div style="left:13px;top:724px;width:1749px;height:113px;background:#f0f0f0"></div><div style="left:12px;top:722px;width:1750px;height:1px;background:#a0a0a0"></div><div style="left:12px;top:723px;width:1750px;height:1px;background:#a0a0a0"></div><div style="left:12px;top:723px;width:1px;height:362px;background:#a0a0a0"></div><div style="left:13px;top:724px;width:1749px;height:1px;background:#ffffff"></div><div style="left:13px;top:742px;width:1749px;height:1px;background:#ffffff"></div><div style="left:13px;top:742px;width:1px;height:95px;background:#ffffff"></div><div style="left:25px;top:742px;width:1px;height:95px;background:#ffffff"></div><div style="left:95px;top:742px;width:1px;height:95px;background:#ffffff"></div><div style="left:200px;top:742px;width:1px;height:95px;background:#ffffff"></div><div style="left:375px;top:742px;width:1px;height:95px;background:#ffffff"></div><div style="left:495px;top:742px;width:1px;height:95px;background:#ffffff"></div><div style="left:575px;top:742px;width:1px;height:95px;background:#ffffff"></div><div style="left:675px;top:742px;width:1px;height:95px;background:#ffffff"></div><div style="left:825px;top:742px;width:1px;height:95px;background:#ffffff"></div><div style="left:963px;top:742px;width:1px;height:95px;background:#ffffff"></div><div style="left:1063px;top:742px;width:1px;height:95px;background:#ffffff"></div><div style="left:1213px;top:742px;width:1px;height:95px;background:#ffffff"></div><div style="left:1353px;top:742px;width:1px;height:95px;background:#ffffff"></div><div style="left:1453px;top:742px;width:1px;height:95px;background:#ffffff"></div><div style="left:1603px;top:742px;width:1px;height:95px;background:#ffffff"></div><div style="left:1742px;top:742px;width:1px;height:95px;background:#ffffff"></div><div style="left:13px;top:724px;width:1px;height:17px;background:#ffffff"></div><div style="left:25px;top:724px;width:1px;height:17px;background:#ffffff"></div><div style="left:575px;top:724px;width:1px;height:17px;background:#ffffff"></div><div style="left:963px;top:724px;width:1px;height:17px;background:#ffffff"></div><div style="left:1353px;top:724px;width:1px;height:17px;background:#ffffff"></div><div style="left:1742px;top:724px;width:1px;height:17px;background:#ffffff"></div><div style="left:12px;top:741px;width:1750px;height:1px;background:#a0a0a0"></div><div style="left:12px;top:837px;width:1750px;height:1px;background:#a0a0a0"></div><div style="left:12px;top:869px;width:1750px;height:1px;background:#a0a0a0"></div><div style="left:24px;top:723px;width:1px;height:146px;background:#a0a0a0"></div><div style="left:94px;top:741px;width:1px;height:128px;background:#a0a0a0"></div><div style="left:199px;top:741px;width:1px;height:128px;background:#a0a0a0"></div><div style="left:374px;top:741px;width:1px;height:128px;background:#a0a0a0"></div><div style="left:494px;top:741px;width:1px;height:128px;background:#a0a0a0"></div><div style="left:574px;top:723px;width:1px;height:146px;background:#a0a0a0"></div><div style="left:674px;top:741px;width:1px;height:128px;background:#a0a0a0"></div><div style="left:824px;top:741px;width:1px;height:128px;background:#a0a0a0"></div><div style="left:962px;top:723px;width:1px;height:146px;background:#a0a0a0"></div><div style="left:1062px;top:741px;width:1px;height:128px;background:#a0a0a0"></div><div style="left:1212px;top:741px;width:1px;height:128px;background:#a0a0a0"></div><div style="left:1352px;top:723px;width:1px;height:146px;background:#a0a0a0"></div><div style="left:1452px;top:741px;width:1px;height:128px;background:#a0a0a0"></div><div style="left:1602px;top:741px;width:1px;height:128px;background:#a0a0a0"></div><div style="left:1741px;top:723px;width:1px;height:146px;background:#a0a0a0"></div><div style="left:375px;top:838px;width:119px;height:31px;background:#d0d3dd"></div><span class="g" style="left:149.5px;top:726px;width:300px;text-align:center">Строительный ресурс</span><span class="g" style="left:618px;top:726px;width:300px;text-align:center">Поставщик №1</span><span class="g" style="left:1007px;top:726px;width:300px;text-align:center">Поставщик №2</span><span class="g" style="left:1396.5px;top:726px;width:300px;text-align:center">Поставщик №3</span><span class="g" style="left:27px;top:783px;">№ п/п</span><span class="g" style="left:97px;top:777px;">Код ресурса (на</span><span class="g" style="left:97px;top:790px;">основе ОКПД 2)</span><span class="g" style="left:202px;top:771px;">Наименование оборудования и</span><span class="g" style="left:202px;top:784px;">материалов (тип, марка, модель,</span><span class="g" style="left:202px;top:797px;">артикул и др.)</span><span class="g" style="left:377px;top:745px;">Номер страницы и</span><span class="g" style="left:377px;top:758px;">позиции. содержащие</span><span class="g" style="left:377px;top:771px;">обоснование</span><span class="g" style="left:377px;top:784px;">стоимости</span><span class="g" style="left:377px;top:797px;">материалов, изделий,</span><span class="g" style="left:377px;top:810px;">конструкций и</span><span class="g" style="left:377px;top:823px;">оборудования</span><span class="g" style="left:497px;top:783px;">Ед. изм.</span><span class="g" style="left:577px;top:777px;">Цена за единицу,</span><span class="g" style="left:577px;top:790px;">руб. с НДС</span><span class="g" style="left:967px;top:777px;">Цена за единицу,</span><span class="g" style="left:967px;top:790px;">руб. с НДС</span><span class="g" style="left:1355px;top:777px;">Цена за единицу,</span><span class="g" style="left:1355px;top:790px;">руб. с НДС</span><span class="g" style="left:677px;top:783px;">Наименование Поставщика</span><span class="g" style="left:1065px;top:783px;">Наименование Поставщика</span><span class="g" style="left:1455px;top:783px;">Наименование Поставщика</span><span class="g" style="left:827px;top:783px;">ИНН</span><span class="g" style="left:1215px;top:783px;">ИНН</span><span class="g" style="left:1605px;top:783px;">ИНН</span><div style="left:1742px;top:742px;width:20px;height:95px;overflow:hidden"><span class="g" style="position:absolute;left:2px;top:21px">Наименование</span><span class="g" style="position:absolute;left:2px;top:34px">экспорта</span><span class="g" style="position:absolute;left:2px;top:47px">за</span><span class="g" style="position:absolute;left:2px;top:60px">НДС</span></div><svg style="left:15px;top:848px" width="6" height="11" viewBox="0 0 6 11"><path d="M0 0L6 5.5L0 11Z" fill="#000"/></svg><span class="g" style="right:1670px;top:841px;">1</span><span class="g" style="left:97px;top:841px;">27.12.40-001</span><span class="g" style="left:97px;top:854px;color:#008000">Строительные</span><svg style="left:181px;top:843px" width="16" height="9" viewBox="0 8.5 16 8"><g fill="#f07010" stroke="#c05000" stroke-width="0.5"><rect x="5.3" y="8.6" width="5.3" height="2.6" rx="1.2"/><rect x="2.65" y="11.2" width="5.3" height="2.6" rx="1.2"/><rect x="7.95" y="11.2" width="5.3" height="2.6" rx="1.2"/><rect x="0.3" y="13.8" width="5.3" height="2.6" rx="1.2"/><rect x="5.3" y="13.8" width="5.3" height="2.6" rx="1.2"/><rect x="10.6" y="13.8" width="5.3" height="2.6" rx="1.2"/></g></svg><span class="g" style="left:202px;top:841px;">Кирпич</span><span class="g" style="left:377px;top:841px;">стр. п.</span><span class="g" style="right:1090px;top:841px;">250,00</span><span class="g" style="right:312px;top:841px;">215,00</span><div style="left:13px;top:1069px;width:1748px;height:16px;background:#f0f0f0"></div><div style="left:13px;top:1084px;width:1748px;height:1px;background:#696969"></div><div style="left:13px;top:1068px;width:17px;height:17px;background:#f0f0f0;border-top:1px solid #fff;border-left:1px solid #fff;border-right:1px solid #696969;border-bottom:1px solid #696969"></div><svg style="left:18px;top:1073px" width="5" height="8" viewBox="0 0 5 8"><path d="M4 0V8L0 4Z" fill="#000"/></svg><div style="left:1743px;top:1068px;width:17px;height:17px;background:#f0f0f0;border-top:1px solid #fff;border-left:1px solid #fff;border-right:1px solid #696969;border-bottom:1px solid #696969"></div><svg style="left:1749px;top:1073px" width="5" height="8" viewBox="0 0 5 8"><path d="M0 0V8L4 4Z" fill="#000"/></svg><div style="left:1px;top:1085px;width:1760px;height:28px;background:#f0f0f0"></div><div style="left:1px;top:1086px;width:1760px;height:1px;background:#ffffff"></div><div style="left:1px;top:1087px;width:1760px;height:1px;background:#ffffff"></div><div style="left:2px;top:1090px;width:85px;height:1px;background:#a0a0a0"></div><div style="left:2px;top:1090px;width:1px;height:23px;background:#a0a0a0"></div><div style="left:87px;top:1090px;width:1px;height:23px;background:#ffffff"></div><div style="left:91px;top:1090px;width:297px;height:1px;background:#a0a0a0"></div><div style="left:91px;top:1090px;width:1px;height:23px;background:#a0a0a0"></div><div style="left:388px;top:1090px;width:1px;height:23px;background:#ffffff"></div><div style="left:392px;top:1090px;width:1298px;height:1px;background:#a0a0a0"></div><div style="left:392px;top:1090px;width:1px;height:23px;background:#a0a0a0"></div><div style="left:1690px;top:1090px;width:1px;height:23px;background:#ffffff"></div><div style="left:1694px;top:1090px;width:30px;height:1px;background:#a0a0a0"></div><div style="left:1694px;top:1090px;width:1px;height:23px;background:#a0a0a0"></div><div style="left:1724px;top:1090px;width:1px;height:23px;background:#ffffff"></div><div style="left:1728px;top:1090px;width:33px;height:1px;background:#a0a0a0"></div><div style="left:1728px;top:1090px;width:1px;height:23px;background:#a0a0a0"></div><div style="left:1761px;top:1090px;width:1px;height:23px;background:#ffffff"></div><div style="left:0px;top:1112px;width:1762px;height:1px;background:#a0a0a0"></div><span style="left:396px;top:1095px;font-size:11.5px;line-height:15px">ИТОГО (руб)  По ЛС: 12 187,28     По объекту: 12 187,28</span><svg style="left:1700px;top:1093px" width="18" height="18" viewBox="0 0 18 18"><circle cx="9" cy="9" r="6.5" fill="#a0a0a0"/><rect x="8" y="5" width="2" height="8" fill="#fff"/><path d="M2 2L16 16" stroke="#f01010" stroke-width="1.8"/></svg><span style="left:1735px;top:1095px;font-size:11.5px;line-height:15px">RU</span><div style="left:496px;top:225px;width:341px;height:437px;background:#f0f0f0;border:1px solid #a0a0a0"></div><svg style="left:500px;top:230px;overflow:visible" width="16" height="16" viewBox="0 0 16 16"><path d="M1 15C3 17 9 17 13 11" stroke="#90aab0" stroke-width="1.5" fill="none"/><path d="M0.5 15.5L3.5 12.5" stroke="#d08030" stroke-width="1.6"/><path d="M6 6L14 15" stroke="#d08840" stroke-width="1.5"/><path d="M2.5 8.5L7.5 3.5" stroke="#505a60" stroke-width="2.6"/><rect x="9" y="0" width="7" height="7" rx="0.8" fill="#f07810"/><circle cx="12.5" cy="3.5" r="1.3" fill="#fff"/><path d="M12.5 0.8V6.2M9.8 3.5H15.2" stroke="#fde0c0" stroke-width="0.6"/></svg><span class="m" style="left:521px;top:232px;color:#000">Добавить расценку</span><span class="m" style="right:939px;top:232px;color:#000">Shift+Ins</span><svg style="left:500px;top:251px;overflow:visible" width="16" height="16" viewBox="0 0 16 16"><g fill="#f07010" stroke="#c05000" stroke-width="0.5"><rect x="5.3" y="8.6" width="5.3" height="2.6" rx="1.2"/><rect x="2.65" y="11.2" width="5.3" height="2.6" rx="1.2"/><rect x="7.95" y="11.2" width="5.3" height="2.6" rx="1.2"/><rect x="0.3" y="13.8" width="5.3" height="2.6" rx="1.2"/><rect x="5.3" y="13.8" width="5.3" height="2.6" rx="1.2"/><rect x="10.6" y="13.8" width="5.3" height="2.6" rx="1.2"/></g><rect x="9" y="0" width="7" height="7" rx="0.8" fill="#f07810"/><circle cx="12.5" cy="3.5" r="1.3" fill="#fff"/><path d="M12.5 0.8V6.2M9.8 3.5H15.2" stroke="#fde0c0" stroke-width="0.6"/></svg><span class="m" style="left:521px;top:253px;color:#000">Добавить ресурс</span><span class="m" style="right:939px;top:253px;color:#000">Ins</span><svg style="left:500px;top:272px;overflow:visible" width="16" height="16" viewBox="0 0 16 16"><rect x="1" y="4" width="11" height="4" fill="#80c080" stroke="#508050" stroke-width="0.6"/><rect x="2" y="8" width="9" height="7" fill="#f8f8d8" stroke="#6a6040"/><rect x="4.5" y="11" width="4" height="1.5" fill="#208020"/><rect x="9" y="0" width="7" height="7" rx="0.8" fill="#f07810"/><circle cx="12.5" cy="3.5" r="1.3" fill="#fff"/><path d="M12.5 0.8V6.2M9.8 3.5H15.2" stroke="#fde0c0" stroke-width="0.6"/></svg><span class="m" style="left:521px;top:274px;color:#000">Добавить подчиненную строку</span><span class="m" style="right:939px;top:274px;color:#000">Alt+Ins</span><svg style="left:500px;top:293px;overflow:visible" width="16" height="16" viewBox="0 0 16 16"><path d="M1.5 3.5H14.5V11.5H7L4.5 14.5V11.5H1.5Z" fill="#e8f6fc" stroke="#a0a0a0"/><rect x="9" y="0" width="7" height="7" rx="0.8" fill="#f07810"/><circle cx="12.5" cy="3.5" r="1.3" fill="#fff"/><path d="M12.5 0.8V6.2M9.8 3.5H15.2" stroke="#fde0c0" stroke-width="0.6"/></svg><span class="m" style="left:521px;top:295px;color:#000">Добавить строку-комментарий</span><span class="m" style="right:939px;top:295px;color:#000">Alt+R</span><svg style="left:500px;top:314px;overflow:visible" width="16" height="16" viewBox="0 0 16 16"><rect x="5" y="3" width="11" height="8" fill="#e82020"/><path d="M0 6H5V12H0Z" fill="#808890"/><circle cx="3" cy="13" r="1.6" fill="#303030"/><circle cx="8" cy="13" r="1.6" fill="#303030"/><circle cx="13" cy="13" r="1.6" fill="#303030"/></svg><span class="m" style="left:521px;top:316px;color:#000">Добавить дополнительную перевозку</span><span class="m" style="right:939px;top:316px;color:#000">Shift+Ctrl+Ins</span><svg style="left:500px;top:335px;overflow:visible" width="16" height="16" viewBox="0 0 16 16"><path d="M3 3L13 13M13 3L3 13" stroke="#f04030" stroke-width="1.4"/></svg><span class="m" style="left:521px;top:337px;color:#000">Удалить</span><span class="m" style="right:939px;top:337px;color:#000">Ctrl+Del</span><div style="left:500px;top:358px;width:333px;height:1px;background:#a0a0a0"></div><div style="left:500px;top:359px;width:333px;height:1px;background:#fff"></div><svg style="left:500px;top:364px;overflow:visible" width="16" height="16" viewBox="0 0 16 16"><circle cx="10" cy="6" r="4.5" fill="#c8d8f8" stroke="#e08040" stroke-width="1.3"/><path d="M6.5 9.5L2 14" stroke="#d06020" stroke-width="2.6" stroke-linecap="round"/></svg><span class="m" style="left:521px;top:366px;color:#000">Поиск по обоснованию</span><span class="m" style="right:939px;top:366px;color:#000">Ctrl+Enter</span><span class="m" style="left:521px;top:387px;color:#000">Поиск по наименованию</span><span class="m" style="right:939px;top:387px;color:#000">Shift+Enter</span><span class="m" style="left:521px;top:408px;color:#000">Выбор по классификатору...</span><span class="m" style="right:939px;top:408px;color:#000">Alt+Enter</span><span class="m" style="left:521px;top:429px;color:#000">Проверка сметы...</span><span class="m" style="left:521px;top:450px;color:#000">Замена ресурсов...</span><span class="m" style="left:521px;top:471px;color:#000">Укрупнение расценок...</span><div style="left:500px;top:492px;width:333px;height:1px;background:#a0a0a0"></div><div style="left:500px;top:493px;width:333px;height:1px;background:#fff"></div><div style="left:499px;top:496px;width:334px;height:21px;background:#0078d7"></div><span class="m" style="left:521px;top:500px;color:#fff">Действия</span><svg style="left:823px;top:502px" width="5" height="8" viewBox="0 0 5 8"><path d="M0 0L4.5 4L0 8Z" fill="#fff"/></svg><span class="m" style="left:521px;top:521px;color:#000">Вид</span><svg style="left:823px;top:523px" width="5" height="8" viewBox="0 0 5 8"><path d="M0 0L4.5 4L0 8Z" fill="#000"/></svg><span class="m" style="left:521px;top:542px;color:#000">Закладки</span><svg style="left:823px;top:544px" width="5" height="8" viewBox="0 0 5 8"><path d="M0 0L4.5 4L0 8Z" fill="#000"/></svg><span class="m" style="left:521px;top:563px;color:#000">Итоги</span><svg style="left:823px;top:565px" width="5" height="8" viewBox="0 0 5 8"><path d="M0 0L4.5 4L0 8Z" fill="#000"/></svg><span class="m" style="left:521px;top:584px;color:#000">Структура</span><svg style="left:823px;top:586px" width="5" height="8" viewBox="0 0 5 8"><path d="M0 0L4.5 4L0 8Z" fill="#000"/></svg><div style="left:500px;top:605px;width:333px;height:1px;background:#a0a0a0"></div><div style="left:500px;top:606px;width:333px;height:1px;background:#fff"></div><span class="m" style="left:521px;top:613px;color:#000">Параметры...</span><span class="m" style="right:939px;top:613px;color:#000">F3</span><div style="left:500px;top:634px;width:333px;height:1px;background:#a0a0a0"></div><div style="left:500px;top:635px;width:333px;height:1px;background:#fff"></div><span class="m" style="left:521px;top:642px;color:#000">Настроить это меню...</span><div style="left:831px;top:493px;width:397px;height:618px;background:#f0f0f0;border:1px solid #a0a0a0"></div><svg style="left:835px;top:498px;overflow:visible" width="16" height="16" viewBox="0 0 16 16"><path d="M3.5 0.5L9.5 11M12.5 0.5L6.5 11" stroke="#a0a0a0" stroke-width="1"/><ellipse cx="4.5" cy="13" rx="2.6" ry="2.2" fill="none" stroke="#209090" stroke-width="1.3"/><ellipse cx="11.5" cy="13" rx="2.6" ry="2.2" fill="none" stroke="#209090" stroke-width="1.3"/></svg><span class="m" style="left:856px;top:500px;color:#000">Вырезать</span><span class="m" style="right:548px;top:500px;color:#000">Ctrl+X</span><svg style="left:835px;top:519px;overflow:visible" width="16" height="16" viewBox="0 0 16 16"><rect x="1" y="1" width="9" height="11" fill="#e0f4f8" stroke="#80b0c0"/><rect x="5" y="4" width="10" height="11" fill="#e8f8fc" stroke="#70a8b8"/><path d="M7 7H13M7 9.5H13M7 12H13" stroke="#70a8b8"/></svg><span class="m" style="left:856px;top:521px;color:#000">Копировать</span><span class="m" style="right:548px;top:521px;color:#000">Ctrl+C</span><svg style="left:835px;top:540px;overflow:visible" width="16" height="16" viewBox="0 0 16 16"><rect x="1" y="1" width="14" height="15" rx="2" fill="#a0a0a0"/></svg><span class="m" style="left:856px;top:542px;color:#a0a0a0">Вставить</span><span class="m" style="right:548px;top:542px;color:#a0a0a0">Ctrl+V</span><div style="left:835px;top:563px;width:390px;height:1px;background:#a0a0a0"></div><div style="left:835px;top:564px;width:390px;height:1px;background:#fff"></div><span class="m" style="left:856px;top:571px;color:#000">Распространить ценовые показатели на выделенные строки</span><span class="m" style="left:856px;top:592px;color:#000">Пересчет цены из КА с учетом индекса ФИ...</span><span class="m" style="right:548px;top:592px;color:#000">Shift+Ctrl+K</span><div style="left:835px;top:613px;width:390px;height:1px;background:#a0a0a0"></div><div style="left:835px;top:614px;width:390px;height:1px;background:#fff"></div><span class="m" style="left:856px;top:621px;color:#000">Вставить позиции из прайса...</span><span class="m" style="right:548px;top:621px;color:#000">Shift+Ctrl+P</span><div style="left:835px;top:642px;width:390px;height:1px;background:#a0a0a0"></div><div style="left:835px;top:643px;width:390px;height:1px;background:#fff"></div><span class="m" style="left:856px;top:650px;color:#000">Импорт сметы из Excel...</span><div style="left:835px;top:671px;width:390px;height:1px;background:#a0a0a0"></div><div style="left:835px;top:672px;width:390px;height:1px;background:#fff"></div><span class="m" style="left:856px;top:679px;color:#000">Перенумерация строк...</span><span class="m" style="left:856px;top:700px;color:#000">Пересчитать смету</span><span class="m" style="left:856px;top:721px;color:#000">Рассчитать по макс\мин стоимости...</span><span class="m" style="left:856px;top:742px;color:#000">Сформировать РТМ (прим. для ФЕР/ТЕР)...</span><div style="left:835px;top:763px;width:390px;height:1px;background:#a0a0a0"></div><div style="left:835px;top:764px;width:390px;height:1px;background:#fff"></div><span class="m" style="left:856px;top:771px;color:#000">Создать ресурсный расчёт...</span><span class="m" style="right:548px;top:771px;color:#000">Shift+Ctrl+R</span><span class="m" style="left:856px;top:792px;color:#000">Создать М29...</span><span class="m" style="right:548px;top:792px;color:#000">Shift+Ctrl+M</span><div style="left:835px;top:813px;width:390px;height:1px;background:#a0a0a0"></div><div style="left:835px;top:814px;width:390px;height:1px;background:#fff"></div><div style="left:834px;top:817px;width:391px;height:21px;background:#0078d7"></div><span class="m" style="left:856px;top:821px;color:#fff">Назначить начисления на выделенную часть...</span><span class="m" style="right:548px;top:821px;color:#fff">Ctrl+Y</span><span class="m" style="left:856px;top:842px;color:#000">Назначить индексы на выделенную часть...</span><span class="m" style="right:548px;top:842px;color:#000">Ctrl+I</span><span class="m" style="left:856px;top:863px;color:#000">Подсветить строки без назначенных индексов</span><span class="m" style="right:548px;top:863px;color:#000">Shift+Ctrl+I</span><div style="left:834px;top:882px;width:18px;height:18px;background:#fbfbfb;border:1px solid #e6e6e6"></div><svg style="left:838px;top:887px" width="9" height="8" viewBox="0 0 9 8"><path d="M1 4L3.5 6.5L8 1" stroke="#000" stroke-width="1.6" fill="none"/></svg><span class="m" style="left:856px;top:884px;color:#000">Подсветить строки без назначенных текущих цен</span><span class="m" style="right:548px;top:884px;color:#000">Shift+Ctrl+T</span><span class="m" style="left:856px;top:905px;color:#000">Подсветить строки без текущих цен, назначенных вручную</span><span class="m" style="left:856px;top:926px;color:#000">Очистить индексы</span><div style="left:835px;top:947px;width:390px;height:1px;background:#a0a0a0"></div><div style="left:835px;top:948px;width:390px;height:1px;background:#fff"></div><span class="m" style="left:856px;top:955px;color:#000">Исключить строку из расчета сметы</span><span class="m" style="right:548px;top:955px;color:#000">Ctrl+D</span><svg style="left:835px;top:974px;overflow:visible" width="16" height="16" viewBox="0 0 16 16"><circle cx="6" cy="8" r="6.2" fill="#fff" stroke="#f01010" stroke-width="1.5"/><path d="M2.5 5L6 12L9.5 3.5" stroke="#202020" stroke-width="1.7" fill="none"/><path d="M1.5 3.5L10.5 12.5" stroke="#f01010" stroke-width="1.3"/></svg><span class="m" style="left:856px;top:976px;color:#000">Исключить ресурс из расчета объемов ресурсов</span><div style="left:835px;top:997px;width:390px;height:1px;background:#a0a0a0"></div><div style="left:835px;top:998px;width:390px;height:1px;background:#fff"></div><span class="m" style="left:856px;top:1005px;color:#000">Материал заказчика</span><span class="m" style="right:548px;top:1005px;color:#000">Ctrl+M</span><span class="m" style="left:856px;top:1026px;color:#000">Оборудование</span><span class="m" style="right:548px;top:1026px;color:#000">Ctrl+K</span><span class="m" style="left:856px;top:1047px;color:#000">Изменить тип строки...</span><span class="m" style="left:856px;top:1068px;color:#000">Обнулить объемы</span><span class="m" style="left:856px;top:1089px;color:#000">Перевызвать формулы</span></body></html>
